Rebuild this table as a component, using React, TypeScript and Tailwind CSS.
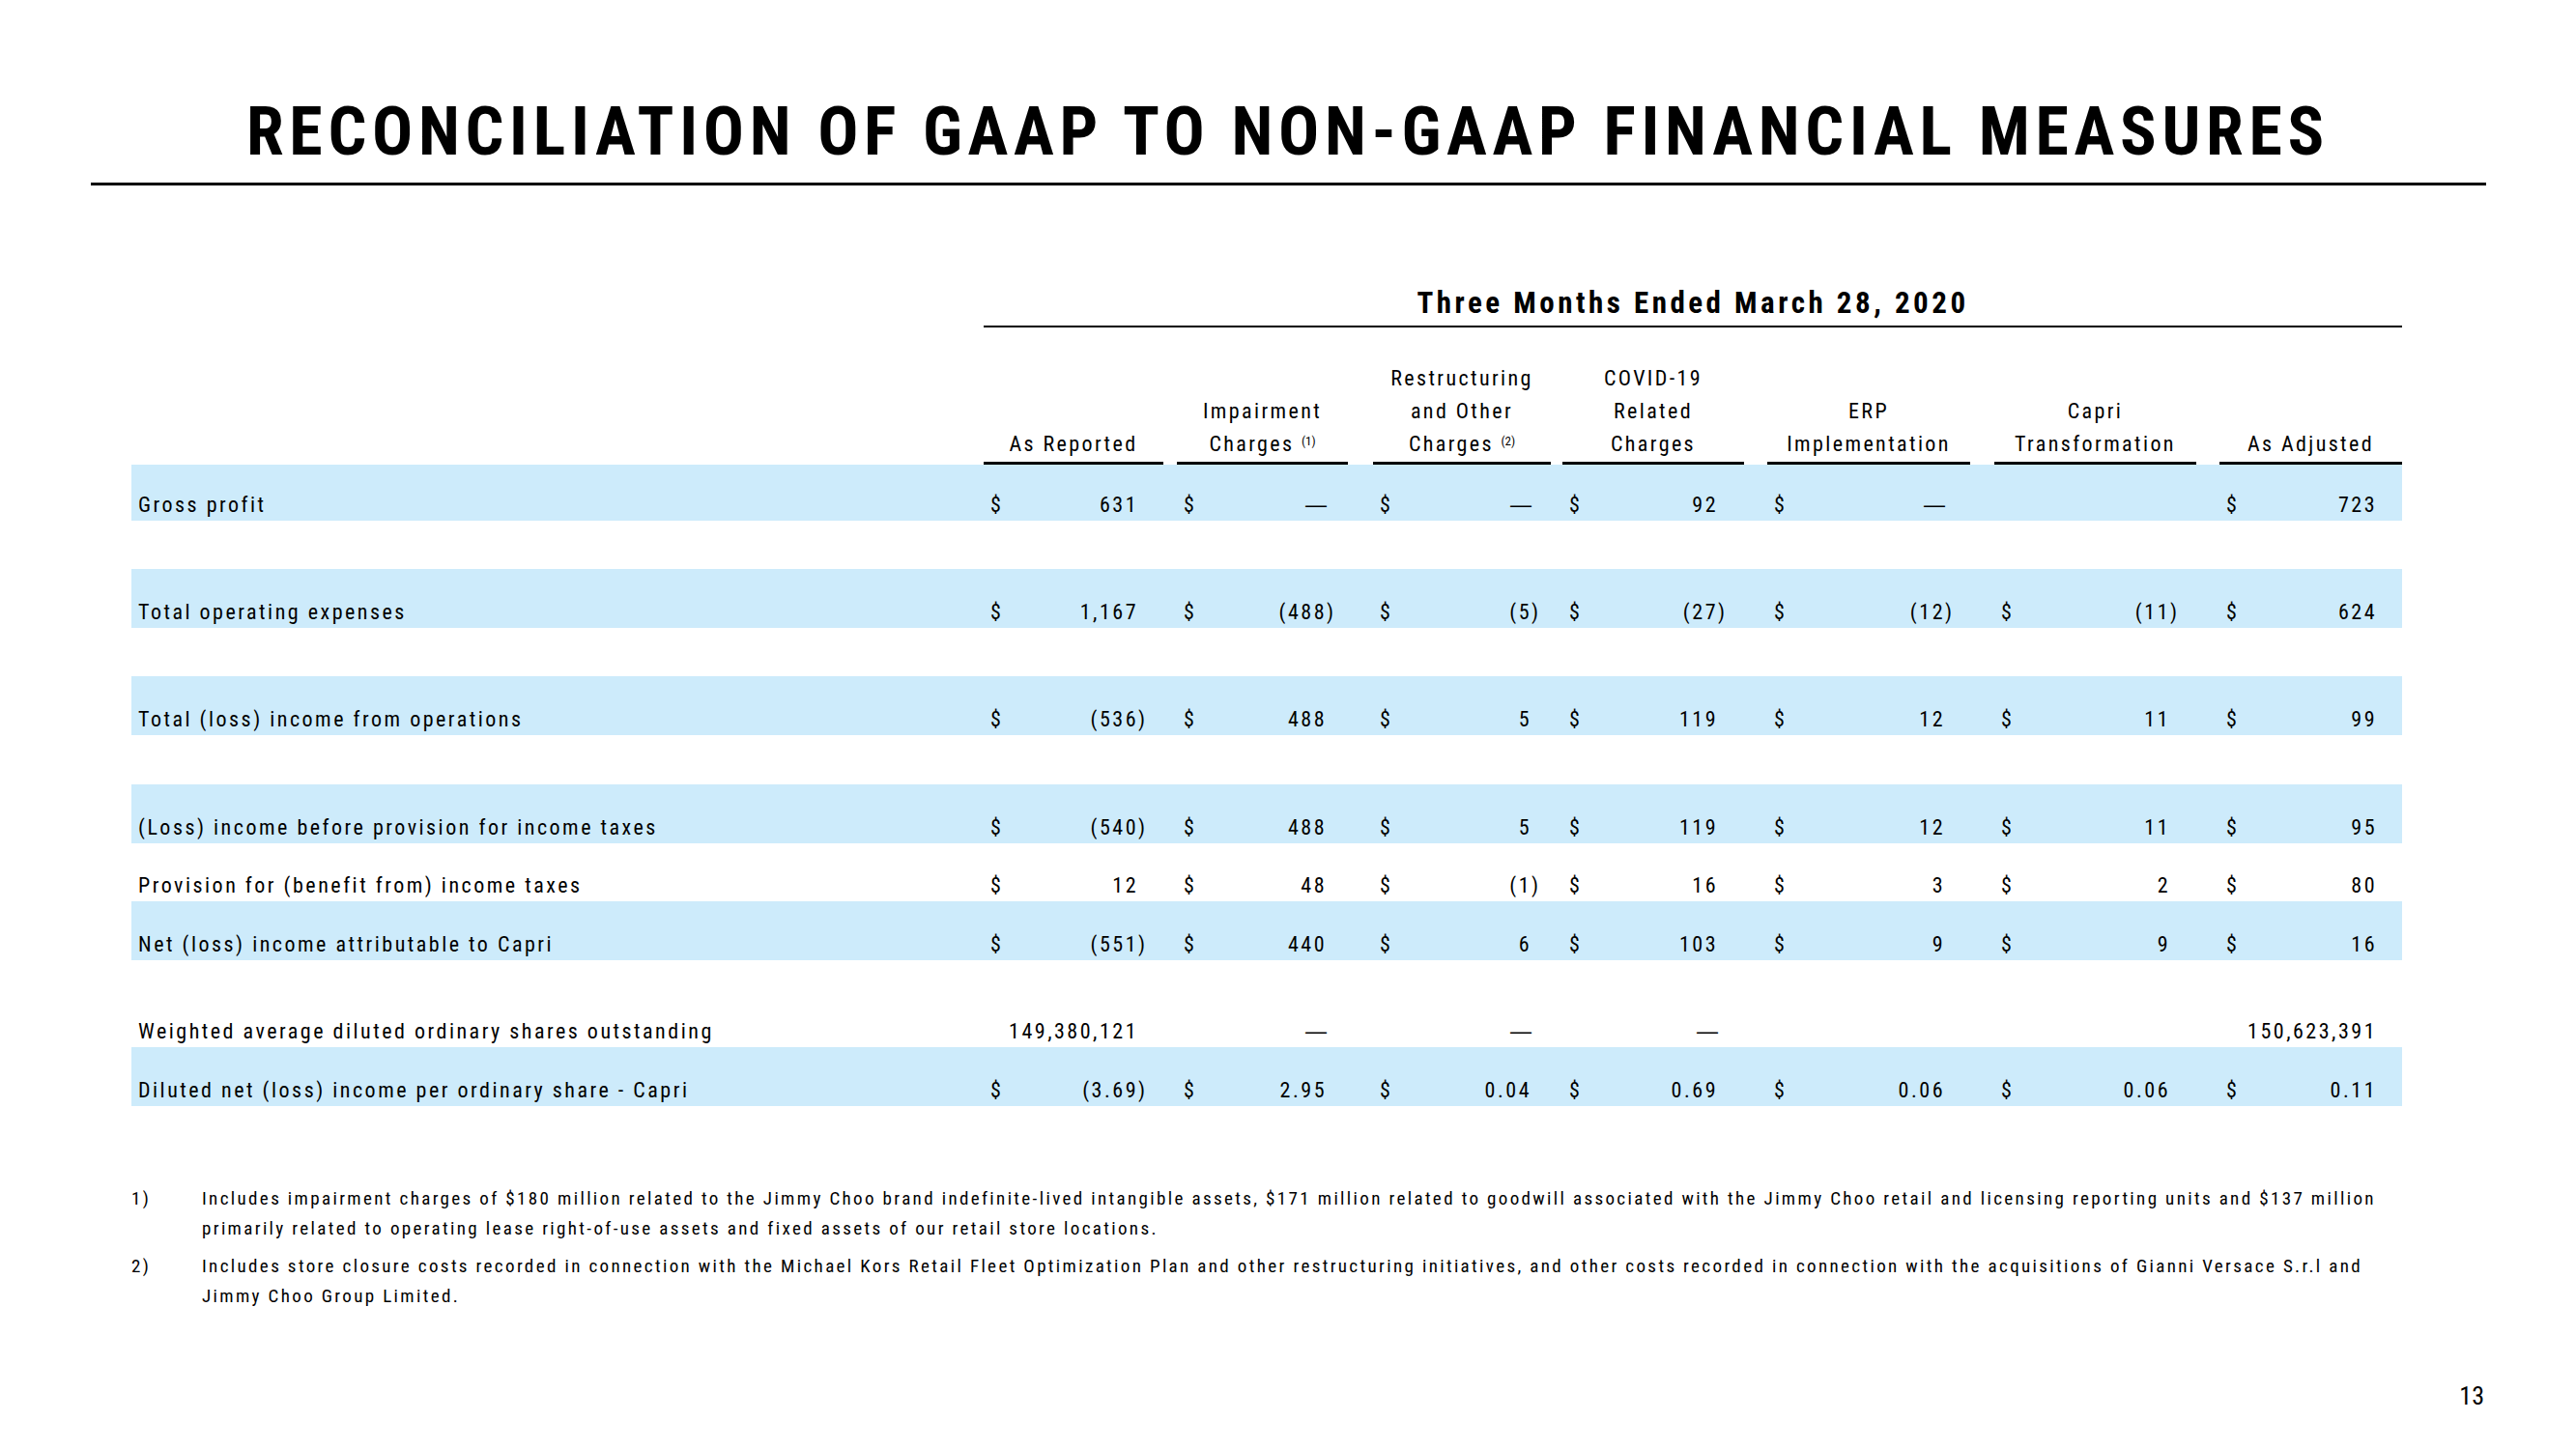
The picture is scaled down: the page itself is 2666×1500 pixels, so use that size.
import React from "react";

type Col = {
  head: React.ReactNode[];
  w: string;
  mr: string;
  pr: string;
};

const cols: Col[] = [
  { head: ["As Reported"], w: "w-[200px]", mr: "mr-[14px]", pr: "pr-[32px]" },
  {
    head: ["Impairment", <>Charges <sup className="text-[13px] tracking-normal">(1)</sup></>],
    w: "w-[203px]",
    mr: "mr-[26px]",
    pr: "pr-[40px]",
  },
  {
    head: ["Restructuring", "and Other", <>Charges <sup className="text-[13px] tracking-normal">(2)</sup></>],
    w: "w-[196px]",
    mr: "mr-[12px]",
    pr: "pr-[24px]",
  },
  { head: ["COVID-19", "Related", "Charges"], w: "w-[212px]", mr: "mr-[24px]", pr: "pr-[43px]" },
  { head: ["ERP", "Implementation"], w: "w-[235px]", mr: "mr-[25px]", pr: "pr-[43px]" },
  { head: ["Capri", "Transformation"], w: "w-[233px]", mr: "mr-[24px]", pr: "pr-[43px]" },
  { head: ["As Adjusted"], w: "w-[189px]", mr: "mr-0", pr: "pr-[18px]" },
];

type Row = {
  label: string;
  blue: boolean;
  dollar: boolean;
  cells: (string | null)[];
  before?: string;
  h?: string;
};

const rows: Row[] = [
  {
    label: "Gross profit",
    blue: true,
    dollar: true,
    h: "h-[58px]",
    cells: ["631", "—", "—", "92", "—", null, "723"],
  },
  {
    label: "Total operating expenses",
    blue: true,
    dollar: true,
    before: "h-[50px]",
    cells: ["1,167", "(488)", "(5)", "(27)", "(12)", "(11)", "624"],
  },
  {
    label: "Total (loss) income from operations",
    blue: true,
    dollar: true,
    before: "h-[50px]",
    cells: ["(536)", "488", "5", "119", "12", "11", "99"],
  },
  {
    label: "(Loss) income before provision for income taxes",
    blue: true,
    dollar: true,
    before: "h-[51px]",
    cells: ["(540)", "488", "5", "119", "12", "11", "95"],
  },
  {
    label: "Provision for (benefit from) income taxes",
    blue: false,
    dollar: true,
    h: "h-[60px]",
    cells: ["12", "48", "(1)", "16", "3", "2", "80"],
  },
  {
    label: "Net (loss) income attributable to Capri",
    blue: true,
    dollar: true,
    cells: ["(551)", "440", "6", "103", "9", "9", "16"],
  },
  {
    label: "Weighted average diluted ordinary shares outstanding",
    blue: false,
    dollar: false,
    before: "h-[29px]",
    cells: ["149,380,121", "—", "—", "—", null, null, "150,623,391"],
  },
  {
    label: "Diluted net (loss) income per ordinary share - Capri",
    blue: true,
    dollar: true,
    cells: ["(3.69)", "2.95", "0.04", "0.69", "0.06", "0.06", "0.11"],
  },
];

function Value({ v, dollar, col }: { v: string | null; dollar: boolean; col: Col }) {
  if (v === null) return <div className={col.w} />;
  const neg = v.endsWith(")");
  const num = neg ? v.slice(0, -1) : v;
  return (
    <div className={`${col.w} flex items-end justify-between pl-[7px] ${col.pr}`}>
      <span>{dollar ? "$" : ""}</span>
      <span className="flex">
        {num === "—" ? (
          <span className="font-['Liberation_Sans',sans-serif] font-stretch-normal tracking-normal">—</span>
        ) : (
          <span>{num}</span>
        )}
        <span className="w-[8px]">{neg ? ")" : ""}</span>
      </span>
    </div>
  );
}

export default function App() {
  return (
    <div className="flex h-[1500px] w-[2666px] flex-col bg-white font-['Roboto','Liberation_Sans',sans-serif] font-stretch-condensed text-black">
      <h1 className="pt-[100px] text-center text-[70px] font-bold leading-[72px] tracking-[5.7px]">
        RECONCILIATION OF GAAP TO NON-GAAP FINANCIAL MEASURES
      </h1>
      <div className="ml-[94px] mt-[17px] w-[2479px] border-t-[3px] border-black" />

      <div className="ml-[136px] w-[2350px]">
        <div className="ml-[882px] mt-[106px] border-b-[2px] border-black pb-[7px] text-center text-[31px] font-bold leading-[32px] tracking-[3.5px]">
          Three Months Ended March 28, 2020
        </div>

        <div className="mt-[36px] flex items-end text-[22px] leading-[34px] tracking-[2.4px]">
          <div className="w-[882px]" />
          {cols.map((c, i) => (
            <div key={i} className={c.w}>
              <div className={`flex flex-col border-b-[3px] border-black pb-[1px] text-center ${c.mr}`}>
                {c.head.map((h, j) => (
                  <div key={j}>{h}</div>
                ))}
              </div>
            </div>
          ))}
        </div>

        <div className="text-[22px] leading-[24px] tracking-[2.5px]">
          {rows.map((r, i) => (
            <React.Fragment key={i}>
              {r.before ? <div className={r.before} /> : null}
              <div
                className={`flex items-end pb-[4px] ${r.h ?? "h-[61px]"} ${
                  r.blue ? "bg-[#cdebfb]" : ""
                }`}
              >
                <div className="w-[882px] pl-[7px]">{r.label}</div>
                {r.cells.map((v, j) => (
                  <Value key={j} v={v} dollar={r.dollar} col={cols[j]} />
                ))}
              </div>
            </React.Fragment>
          ))}
        </div>

        <div className="mt-[80px] whitespace-nowrap text-[19px] leading-[31px] tracking-[2.36px]">
          <div className="flex">
            <div className="w-[73px]">1)</div>
            <div>
              Includes impairment charges of $180 million related to the Jimmy Choo brand indefinite-lived
              intangible assets, $171 million related to goodwill associated with the Jimmy Choo retail and
              licensing reporting units and $137 million
              <br />
              primarily related to operating lease right-of-use assets and fixed assets of our retail store
              locations.
            </div>
          </div>
          <div className="mt-[8px] flex">
            <div className="w-[73px]">2)</div>
            <div>
              Includes store closure costs recorded in connection with the Michael Kors Retail Fleet
              Optimization Plan and other restructuring initiatives, and other costs recorded in connection
              with the acquisitions of Gianni Versace S.r.l and
              <br />
              Jimmy Choo Group Limited.
            </div>
          </div>
        </div>
      </div>

      <div className="mt-auto flex justify-end pb-[40px] pr-[95px] text-[26px] leading-[30px]">13</div>
    </div>
  );
}
